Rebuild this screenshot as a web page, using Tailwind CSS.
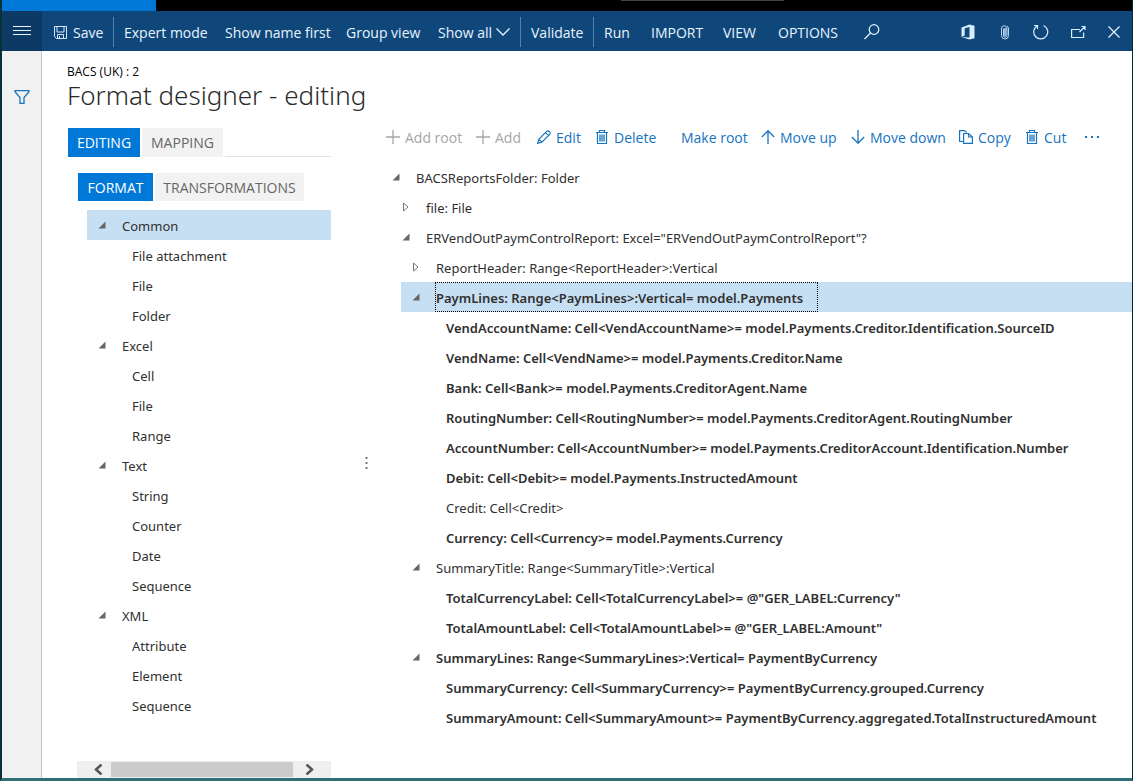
<!DOCTYPE html>
<html lang="en">
<head>
<meta charset="utf-8">
<title>Format designer - editing</title>
<script src="https://cdn.jsdelivr.net/npm/@tailwindcss/browser@4"></script>
</head>
<body class="font-['Open_Sans','Noto_Sans',sans-serif] text-[13px] text-[#303030]">
<svg class="hidden">
  <symbol id="open" viewBox="0 0 8 8"><path d="M7.5.5v7H.5z" fill="#666"/></symbol>
  <symbol id="closed" viewBox="0 0 8 10"><path d="M1.5 1v8L6 5z" fill="none" stroke="#777"/></symbol>
  <symbol id="plus" viewBox="0 0 14 14"><path d="M7 0v14M0 7h14" stroke="currentColor" stroke-width="1.300"/></symbol>
  <symbol id="trash" viewBox="0 0 12 14"><path d="M0 2.500h12M3.500 2.500V.5h5v2M1.500 2.500v11h9v-11" fill="none" stroke="currentColor" stroke-width="1.200"/><path d="M4 4.500v7M6 4.500v7M8 4.500v7" stroke="currentColor" stroke-width="1.300"/></symbol>
</svg>
<div class="flex h-screen flex-col border-b-[3px] border-l-2 border-r border-b-[#2f6f78] border-l-[#06303a] border-r-[#06242c] bg-white">
  <div class="flex h-[11px] shrink-0 bg-black">
    <div class="w-[154px] bg-[#0078d7]"></div>
    <div class="ml-[465px] h-px w-[163px] bg-[#444]"></div>
  </div>

  <nav class="flex h-10 shrink-0 items-center bg-[#10477a] pt-[2px] text-[14px] whitespace-nowrap text-[#e8f4ff]">
    <button aria-label="Menu" class="-mt-[2px] flex h-10 w-10 shrink-0 items-center justify-center bg-[#0c3a65]">
      <svg class="h-3 w-5" viewBox="0 0 20 12"><path d="M1 1.500h18M1 5.500h18M1 9.500h18" stroke="#e8f4ff"/></svg>
    </button>
    <button class="ml-3 flex w-[59px] shrink-0 items-center gap-[6px] text-left">
      <svg class="h-[13px] w-[13px] shrink-0" viewBox="0 0 13 13" fill="none" stroke="#d4e8fa"><path d="M.5.5h12v12H2.500l-2-2zM3 .5v5.500h7V.5M3.500 12.500V8.500h6v4M5.500 10v2.500"/></svg>Save</button>
    <span class="h-[30px] w-px shrink-0 bg-[#5580a8]"></span>
    <button class="ml-[10px] w-[101px] shrink-0 text-left">Expert mode</button>
    <button class="w-[121px] shrink-0 text-left">Show name first</button>
    <button class="w-[92px] shrink-0 text-left">Group view</button>
    <button class="flex w-[82px] shrink-0 items-center gap-1 text-left">Show all
      <svg class="h-2 w-[14px] shrink-0" viewBox="0 0 14 8"><path d="M.5.5 7 7l6.500-6.500" fill="none" stroke="#e8f4ff" stroke-width="1.300"/></svg></button>
    <span class="h-[30px] w-px shrink-0 bg-[#5580a8]"></span>
    <button class="ml-[10px] w-[62px] shrink-0 text-left">Validate</button>
    <span class="h-[30px] w-px shrink-0 bg-[#5580a8]"></span>
    <button class="ml-[10px] w-[47px] shrink-0 text-left">Run</button>
    <button class="w-[72px] shrink-0 text-left">IMPORT</button>
    <button class="w-[55px] shrink-0 text-left">VIEW</button>
    <button class="w-[86px] shrink-0 text-left">OPTIONS</button>
    <button aria-label="Search" class="shrink-0"><svg class="h-4 w-4" viewBox="0 0 16 16" fill="none" stroke="#e8f4ff" stroke-width="1.200"><circle cx="10" cy="5.500" r="4.800"/><path d="M6.500 9 .5 15"/></svg></button>
    <div class="ml-auto flex items-center gap-[22px] pr-3">
      <button aria-label="Office" class="mr-[3px]"><svg class="h-4 w-[14px]" viewBox="0 0 14 16"><path d="M.5 3.500 8.500.5l5 1.300v12.400l-5 1.300-8-2.500 8 .5V3L3.700 4.200v7.300L.5 13z" fill="#d8edff"/></svg></button>
      <button aria-label="Attachments" class="mr-px"><svg class="h-4 w-[10px]" viewBox="0 0 10 16" fill="none" stroke="#bcd6ee"><rect x="3.500" y="4" width="3" height="8" fill="#8fb4d8" stroke="none"/><path d="M8.500 5v6.500a3.500 3.500 0 0 1-7 0V4a2.800 2.800 0 0 1 5.500 0v7.500a1.700 1.700 0 0 1-3.500 0V5M7 2c1 .5 1.500 1.500 1.500 3"/></svg></button>
      <button aria-label="Refresh"><svg class="h-4 w-4" viewBox="0 0 16 16" fill="none" stroke="#d8edff" stroke-width="1.200"><path d="M10.500 1.500a7 7 0 1 1-6.500.5M1 1.500h3.500V5"/></svg></button>
      <button aria-label="Open in new window"><svg class="h-[14px] w-[15px]" viewBox="0 0 15 14" fill="none" stroke="#d8edff" stroke-width="1.200"><path d="M9 4.500H.6v8h12V7.500M8.500 7l5.500-5.500M10.500 1.500H14V5"/></svg></button>
      <button aria-label="Close"><svg class="h-3 w-3" viewBox="0 0 12 12"><path d="m.5.5 11 11M11.500.5l-11 11" stroke="#e8f4ff" stroke-width="1.200"/></svg></button>
    </div>
  </nav>

  <div class="flex min-h-0 flex-1">
    <aside class="flex w-10 shrink-0 justify-center border-r border-[#c6c6c6] bg-[#f1f1f1] pt-[39px]">
      <button aria-label="Filter" class="h-[14px]"><svg class="h-[14px] w-4" viewBox="0 0 16 14"><path d="M1 .7h14v1L10 7.500v5.800H6V7.500L1 1.700z" fill="none" stroke="#1673c0" stroke-width="1.300"/></svg></button>
    </aside>
    <main class="flex min-w-0 flex-1 flex-col pl-[25px]">
      <header class="pt-3 text-black">
        <p class="text-[12px] leading-[18px]">BACS (UK) : 2</p>
        <h1 class="font-['Noto_Sans','Open_Sans',sans-serif] text-[26px] leading-7 font-light text-[#2a2a2a]">Format designer - editing</h1>
      </header>
      <div class="flex min-h-0 flex-1">
        <section class="flex w-[264px] shrink-0 flex-col pt-[19px]">
          <div role="tablist" class="ml-px flex gap-[2px] text-[14px] text-[#666]">
            <button role="tab" aria-selected="true" class="h-[29px] w-[72px] bg-[#0078d7] text-white">EDITING</button>
            <button role="tab" class="h-[29px] w-[81px] bg-[#f2f2f2]">MAPPING</button>
            <span class="flex-1 border-b border-[#e2e2e2]"></span>
          </div>
          <div role="tablist" class="mt-4 ml-[11px] flex gap-[2px] text-[14px] text-[#666]">
            <button role="tab" aria-selected="true" class="h-7 w-[75px] bg-[#0078d7] text-white">FORMAT</button>
            <button role="tab" class="h-7 w-[149px] bg-[#f2f2f2]">TRANSFORMATIONS</button>
          </div>
          <ul id="palette" class="mt-[9px] ml-5 font-['Noto_Sans','Open_Sans',sans-serif] leading-7"></ul>
          <div class="mt-auto ml-[10px] flex h-[17px] items-center bg-[#efefef]">
            <button aria-label="Scroll left" class="flex w-[34px] justify-end pr-2"><svg class="h-[11px] w-[10px]" viewBox="0 0 10 11"><path d="M8.500.5 3 5.500l5.500 5" fill="none" stroke="#555" stroke-width="2.500"/></svg></button>
            <div class="h-[15px] w-[182px] bg-[#cbcbcb]"></div>
            <button aria-label="Scroll right" class="flex flex-1 pl-3"><svg class="h-[11px] w-[10px]" viewBox="0 0 10 11"><path d="m1.500.5 5.500 5-5.500 5" fill="none" stroke="#555" stroke-width="2.500"/></svg></button>
          </div>
        </section>
        <div class="flex w-[55px] shrink-0 justify-center pt-[348px]">
          <svg class="ml-4 h-3 w-[3px]" viewBox="0 0 3 12" fill="#777"><path d="M.5 0h2v2h-2zM.5 5h2v2h-2zM.5 10h2v2h-2z"/></svg>
        </div>
        <section class="min-w-0 flex-1 pt-[18px]">
          <div class="flex h-5 items-center text-[14px] whitespace-nowrap text-[#1673c0]">
            <button disabled class="flex w-[90px] shrink-0 items-center gap-[5px] text-[#a6a6a6]"><svg class="h-[14px] w-[14px] shrink-0"><use href="#plus"/></svg>Add root</button>
            <button disabled class="flex w-[61px] shrink-0 items-center gap-[5px] text-[#a6a6a6]"><svg class="h-[14px] w-[14px] shrink-0"><use href="#plus"/></svg>Add</button>
            <button class="flex w-[59px] shrink-0 items-center gap-[5px]"><svg class="h-[14px] w-[14px] shrink-0" viewBox="0 0 14 14" fill="none" stroke="currentColor" stroke-width="1.100"><path d="M.6 13.400 1.800 9.300l7.800-7.800c1.500-2 4.900 1.300 3 3L4.800 12.200zM8.500 2.600l3 3M1.800 9.300l3 2.900"/></svg>Edit</button>
            <button class="flex w-[85px] shrink-0 items-center gap-[6px]"><svg class="h-[14px] w-3 shrink-0"><use href="#trash"/></svg>Delete</button>
            <button class="w-[80px] shrink-0 text-left">Make root</button>
            <button class="flex w-[90px] shrink-0 items-center gap-[5px]"><svg class="h-[14px] w-[14px] shrink-0" viewBox="0 0 14 14" fill="none" stroke="currentColor" stroke-width="1.300"><path d="M7 14V1M.8 7 7 .8 13.200 7"/></svg>Move up</button>
            <button class="flex w-[108px] shrink-0 items-center gap-[5px]"><svg class="h-[14px] w-[14px] shrink-0" viewBox="0 0 14 14" fill="none" stroke="currentColor" stroke-width="1.300"><path d="M7 0v13M.8 7 7 13.200 13.200 7"/></svg>Move down</button>
            <button class="flex w-[67px] shrink-0 items-center gap-[5px]"><svg class="h-[14px] w-[14px] shrink-0" viewBox="0 0 14 14" fill="none" stroke="currentColor" stroke-width="1.200"><path d="M4.500 11.500H.6V.6h5l2 2M4.600 3.500h5L13.400 7v6.400H4.600zM9.500 3.500V7h4"/></svg>Copy</button>
            <button class="flex w-[58px] shrink-0 items-center gap-[6px]"><svg class="h-[14px] w-3 shrink-0"><use href="#trash"/></svg>Cut</button>
            <button aria-label="More" class="shrink-0"><svg class="h-2 w-4" viewBox="0 0 16 8" fill="currentColor"><path d="M1 3h2v2H1zM7 3h2v2H7zM13 3h2v2h-2z"/></svg></button>
          </div>
          <ul id="format" class="mt-[15px] ml-[15px] font-['Noto_Sans','Open_Sans',sans-serif] leading-7 whitespace-nowrap"></ul>
        </section>
      </div>
    </main>
  </div>
</div>
<script>
const indent = ['pl-[11px]', 'pl-[21px]'];
const rightIndent = ['-ml-[9px]', 'pl-px', 'pl-[11px]', 'pl-[21px]'];
function row(list, pad, mark, text, bold, selected, focus) {
  const li = document.createElement('li');
  li.className = 'flex h-[30px] items-center ' + pad + (bold ? ' font-semibold' : '') + (selected ? ' bg-[#c7dff3]' : '');
  const box = document.createElement(mark ? 'button' : 'span');
  box.className = 'flex h-4 w-[24px] shrink-0 items-center';
  if (mark) {
    box.setAttribute('aria-label', mark === 'open' ? 'Collapse' : 'Expand');
    box.innerHTML = mark === 'open' ? '<svg class="h-2 w-2"><use href="#open"/></svg>' : '<svg class="h-[10px] w-2"><use href="#closed"/></svg>';
  }
  const label = document.createElement('span');
  label.textContent = text;
  label.className = focus ? '-ml-px h-[30px] border border-dotted border-black pt-px pr-[14px]' : 'h-[30px] pt-[2px]';
  li.append(box, label);
  list.append(li);
}
const palette = document.getElementById('palette');
[['Common', ['File attachment', 'File', 'Folder']], ['Excel', ['Cell', 'File', 'Range']],
 ['Text', ['String', 'Counter', 'Date', 'Sequence']], ['XML', ['Attribute', 'Element', 'Sequence']]]
.forEach(([group, items]) => {
  row(palette, indent[0], 'open', group, false, group === 'Common');
  items.forEach(t => row(palette, indent[1], '', t));
});
const format = document.getElementById('format');
[[0, 'open', 'BACSReportsFolder: Folder'],
 [1, 'closed', 'file: File'],
 [1, 'open', 'ERVendOutPaymControlReport: Excel="ERVendOutPaymControlReport"?'],
 [2, 'closed', 'ReportHeader: Range<ReportHeader>:Vertical'],
 [2, 'open', 'PaymLines: Range<PaymLines>:Vertical= model.Payments', 1, 1],
 [3, '', 'VendAccountName: Cell<VendAccountName>= model.Payments.Creditor.Identification.SourceID', 1],
 [3, '', 'VendName: Cell<VendName>= model.Payments.Creditor.Name', 1],
 [3, '', 'Bank: Cell<Bank>= model.Payments.CreditorAgent.Name', 1],
 [3, '', 'RoutingNumber: Cell<RoutingNumber>= model.Payments.CreditorAgent.RoutingNumber', 1],
 [3, '', 'AccountNumber: Cell<AccountNumber>= model.Payments.CreditorAccount.Identification.Number', 1],
 [3, '', 'Debit: Cell<Debit>= model.Payments.InstructedAmount', 1],
 [3, '', 'Credit: Cell<Credit>'],
 [3, '', 'Currency: Cell<Currency>= model.Payments.Currency', 1],
 [2, 'open', 'SummaryTitle: Range<SummaryTitle>:Vertical'],
 [3, '', 'TotalCurrencyLabel: Cell<TotalCurrencyLabel>= @"GER_LABEL:Currency"', 1],
 [3, '', 'TotalAmountLabel: Cell<TotalAmountLabel>= @"GER_LABEL:Amount"', 1],
 [2, 'open', 'SummaryLines: Range<SummaryLines>:Vertical= PaymentByCurrency', 1],
 [3, '', 'SummaryCurrency: Cell<SummaryCurrency>= PaymentByCurrency.grouped.Currency', 1],
 [3, '', 'SummaryAmount: Cell<SummaryAmount>= PaymentByCurrency.aggregated.TotalInstructuredAmount', 1]]
.forEach(([level, mark, text, bold, selected]) => row(format, rightIndent[level], mark, text, bold, selected, selected));
</script>
</body>
</html>
